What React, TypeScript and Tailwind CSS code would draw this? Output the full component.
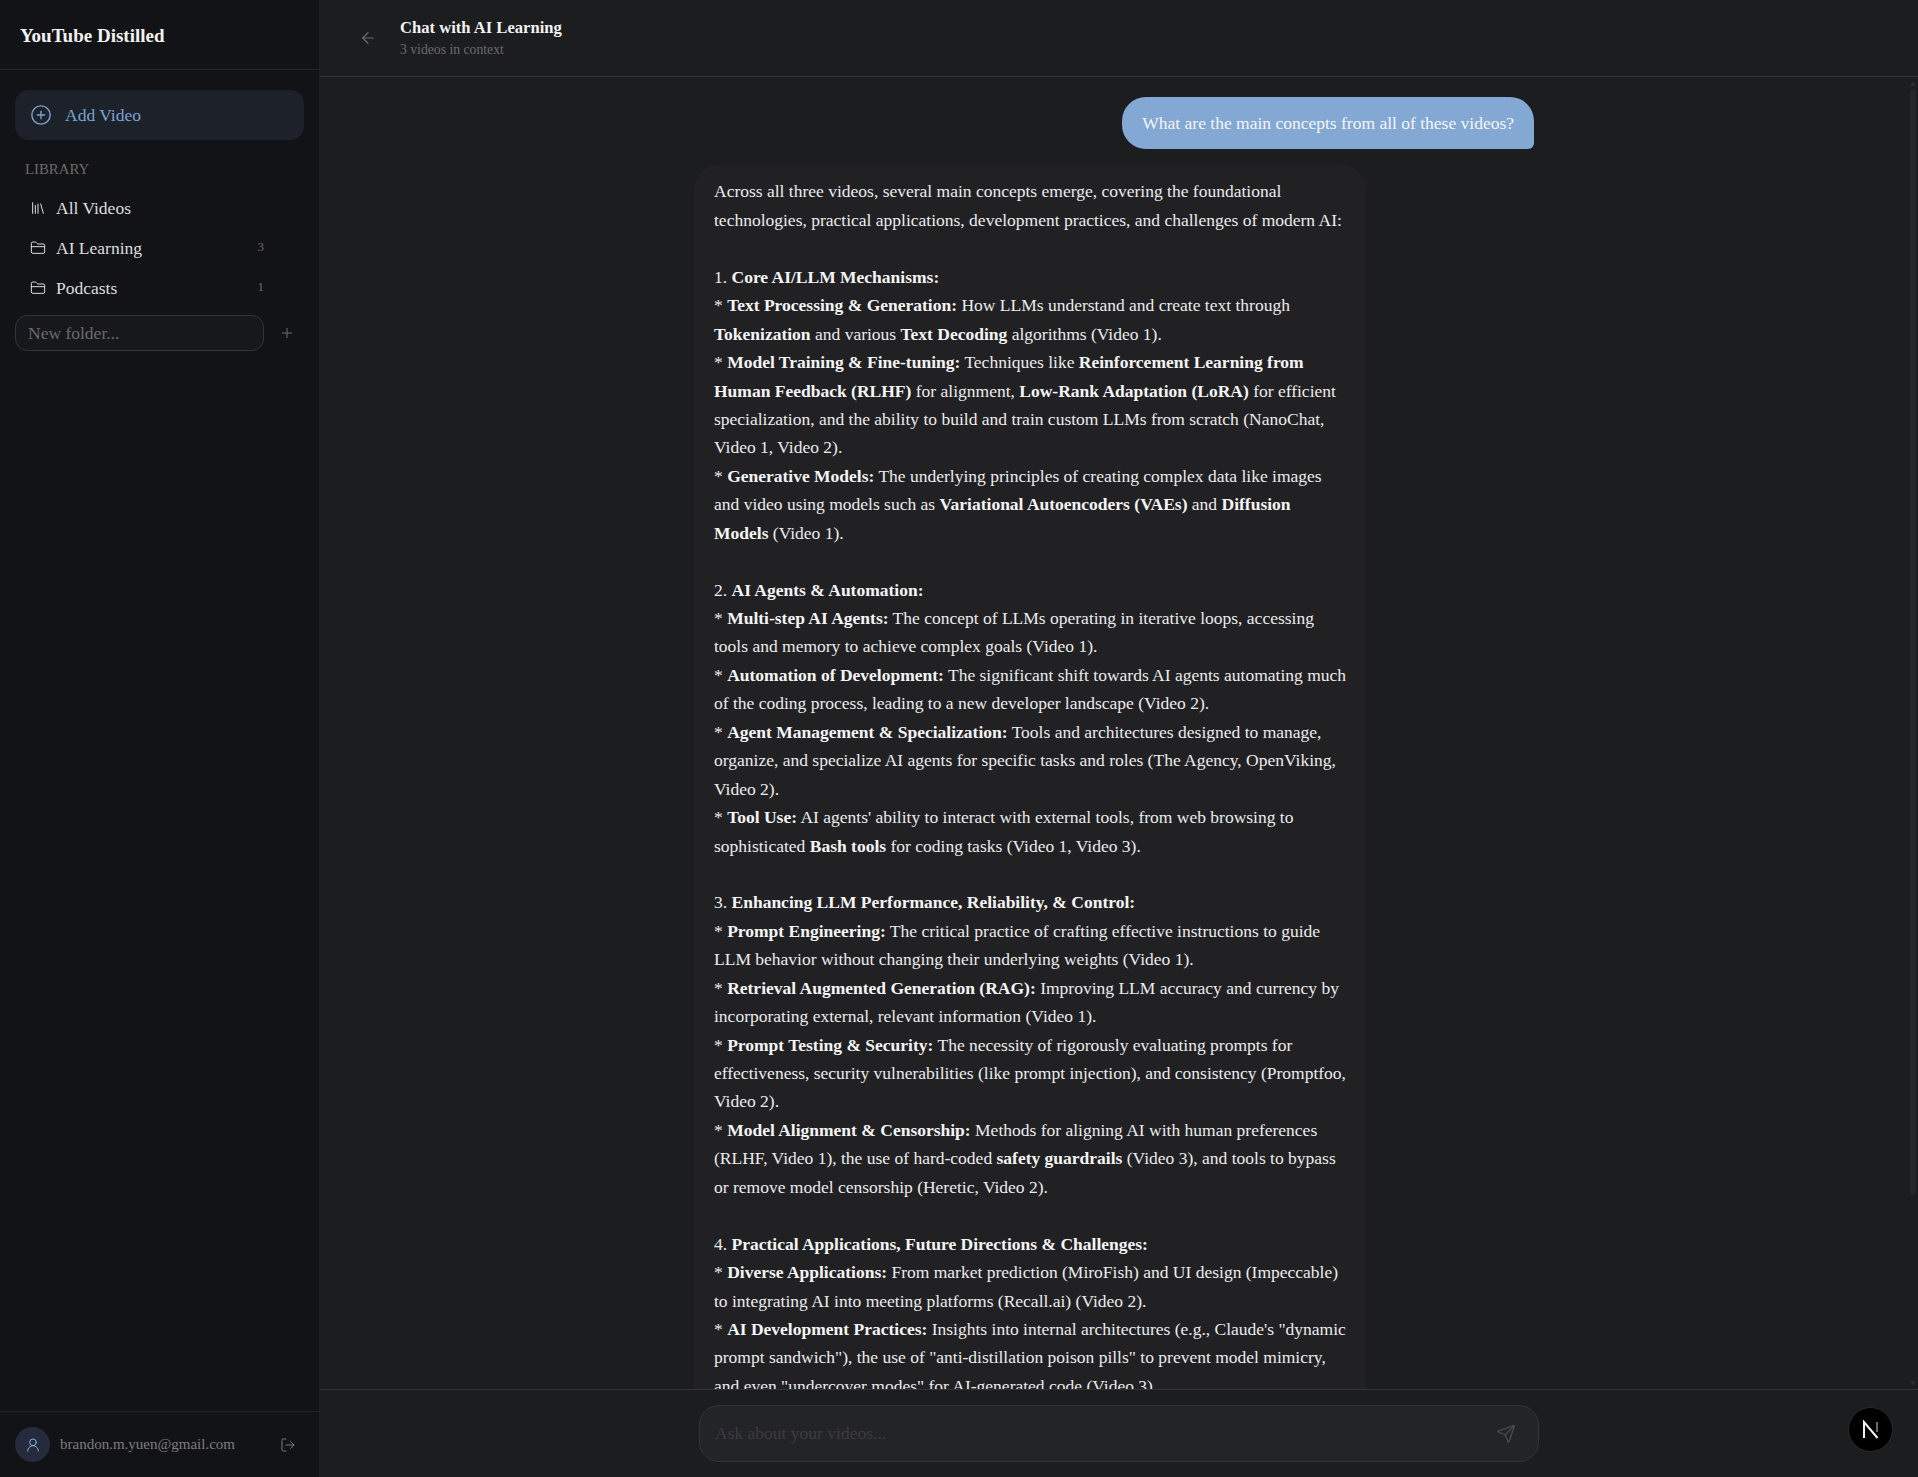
import { ArrowLeft, CirclePlus, FolderClosed, Library, LogOut, Plus, Send, UserRound } from "lucide-react";

const answer = `Across all three videos, several main concepts emerge, covering the foundational technologies, practical applications, development practices, and challenges of modern AI:

1. **Core AI/LLM Mechanisms:**
* **Text Processing & Generation:** How LLMs understand and create text through **Tokenization** and various **Text Decoding** algorithms (Video 1).
* **Model Training & Fine-tuning:** Techniques like **Reinforcement Learning from Human Feedback (RLHF)** for alignment, **Low-Rank Adaptation (LoRA)** for efficient specialization, and the ability to build and train custom LLMs from scratch (NanoChat, Video 1, Video 2).
* **Generative Models:** The underlying principles of creating complex data like images and video using models such as **Variational Autoencoders (VAEs)** and **Diffusion Models** (Video 1).

2. **AI Agents & Automation:**
* **Multi-step AI Agents:** The concept of LLMs operating in iterative loops, accessing tools and memory to achieve complex goals (Video 1).
* **Automation of Development:** The significant shift towards AI agents automating much of the coding process, leading to a new developer landscape (Video 2).
* **Agent Management & Specialization:** Tools and architectures designed to manage, organize, and specialize AI agents for specific tasks and roles (The Agency, OpenViking, Video 2).
* **Tool Use:** AI agents' ability to interact with external tools, from web browsing to sophisticated **Bash tools** for coding tasks (Video 1, Video 3).

3. **Enhancing LLM Performance, Reliability, & Control:**
* **Prompt Engineering:** The critical practice of crafting effective instructions to guide LLM behavior without changing their underlying weights (Video 1).
* **Retrieval Augmented Generation (RAG):** Improving LLM accuracy and currency by incorporating external, relevant information (Video 1).
* **Prompt Testing & Security:** The necessity of rigorously evaluating prompts for effectiveness, security vulnerabilities (like prompt injection), and consistency (Promptfoo, Video 2).
* **Model Alignment & Censorship:** Methods for aligning AI with human preferences (RLHF, Video 1), the use of hard-coded **safety guardrails** (Video 3), and tools to bypass or remove model censorship (Heretic, Video 2).

4. **Practical Applications, Future Directions & Challenges:**
* **Diverse Applications:** From market prediction (MiroFish) and UI design (Impeccable) to integrating AI into meeting platforms (Recall.ai) (Video 2).
* **AI Development Practices:** Insights into internal architectures (e.g., Claude's "dynamic prompt sandwich"), the use of "anti-distillation poison pills" to prevent model mimicry, and even "undercover modes" for AI-generated code (Video 3).`;

const folders = [
  { name: "AI Learning", count: 3 },
  { name: "Podcasts", count: 1 },
];

const Sidebar = () => {
  return (
    <aside className="w-[320px] shrink-0 h-full flex flex-col bg-[#121316] border-r border-[#1f2023]">
      <div className="h-[70px] shrink-0 flex items-center px-5 border-b border-[#232427]">
        <h1 className="mt-[4px] text-[19px] font-bold text-[#f2f2f2]">YouTube Distilled</h1>
      </div>
      <div className="flex-1 px-[15px] pt-5">
        <button className="w-full h-[50px] flex items-center gap-[13px] px-[15px] rounded-[14px] bg-[#1d2129] text-[#7ba4d4] text-[17.5px]">
          <CirclePlus size={22} strokeWidth={1.5} />
          Add Video
        </button>
        <p className="mt-[19px] px-[10px] text-[14.8px] leading-5 text-[#6f6a66]">LIBRARY</p>
        <div className="mt-[9px] flex flex-col">
          <div className="h-10 flex items-center gap-[10px] px-[15px] text-[17.5px] text-[#dedede]">
            <Library size={16} strokeWidth={1.5} />
            All Videos
          </div>
          {folders.map((f) => (
            <div key={f.name} className="h-10 flex items-center gap-[10px] px-[15px] text-[17.5px] text-[#dedede]">
              <FolderClosed size={16} strokeWidth={1.5} />
              <span className="flex-1">{f.name}</span>
              <span className="text-[13px] text-[#6b6b6b] mr-[25px] -mt-[2px]">{f.count}</span>
            </div>
          ))}
        </div>
        <div className="mt-[7px] flex items-center">
          <input
            placeholder="New folder..."
            className="w-[249px] h-[36px] px-[12px] rounded-[12px] border border-[#333438] bg-[#17181b] text-[17.5px] outline-none placeholder:text-[#6b6b6b]"
          />
          <Plus size={16} strokeWidth={1.5} className="ml-[15px] text-[#6f6f6f]" />
        </div>
      </div>
      <div className="h-[66px] shrink-0 flex items-center px-[15px] border-t border-[#232427]">
        <div className="w-[35px] h-[35px] rounded-full bg-[#252b3d] flex items-center justify-center text-[#7fb0de]">
          <UserRound size={16} strokeWidth={1.5} />
        </div>
        <span className="ml-[10px] flex-1 text-[15px] text-[#7d7d7d]">brandon.m.yuen@gmail.com</span>
        <LogOut size={16} strokeWidth={1.5} className="mr-[8px] text-[#7d7d7d]" />
      </div>
    </aside>
  );
};

const Message = ({ text }: { text: string }) => {
  const parts = text.split("**");
  return (
    <div className="max-w-[672px] self-start rounded-[24px] bg-[#212124] px-5 py-3 text-[#ececec] whitespace-pre-wrap">
      {parts.map((p, i) => (i % 2 ? <strong key={i} className="font-bold text-[#f5f5f5]">{p}</strong> : p))}
    </div>
  );
};

const App = () => {
  return (
    <div className="h-screen w-full flex overflow-hidden bg-[#1c1d1f] font-['Liberation_Serif',serif]">
      <Sidebar />
      <main className="flex-1 min-w-0 h-full flex flex-col">
        <header className="h-[77px] shrink-0 flex items-center gap-[23px] pl-[39px] border-b border-[#333437]">
          <ArrowLeft size={18} strokeWidth={1.5} className="text-[#6f6f6f]" />
          <div className="-mt-[1px]">
            <h2 className="text-[16.6px] leading-6 font-bold text-[#f2f2f2]">Chat with AI Learning</h2>
            <p className="text-[13.7px] leading-5 text-[#6b6b6b]">3 videos in context</p>
          </div>
        </header>
        <div className="relative flex-1 min-h-0 overflow-hidden pr-[10px]">
          <div className="w-[840px] mx-auto py-5 flex flex-col gap-4 text-[17.5px] leading-[1.625]">
            <div className="self-end rounded-[24px] rounded-br-[6px] bg-[#83a8d3] px-5 py-3 text-[#f5f5f5]">
              What are the main concepts from all of these videos?
            </div>
            <Message text={answer} />
          </div>
          {/* scrollbar, the sandbox browser hides native ones */}
          <div className="absolute right-[2px] top-[4px] w-0 h-0 border-x-[3px] border-x-transparent border-b-[5px] border-b-[#2a2b2e]" />
          <div className="absolute right-[2px] top-[12px] w-[6px] h-[1106px] rounded-full bg-[#252629]" />
          <div className="absolute right-[2px] bottom-[3px] w-0 h-0 border-x-[3px] border-x-transparent border-t-[5px] border-t-[#2a2b2e]" />
        </div>
        <footer className="h-[88px] shrink-0 relative flex justify-center pt-[15px] border-t border-[#333437]">
          <div className="w-[840px] h-[57px] flex items-center justify-between px-[15px] rounded-[20px] border border-[#333437] bg-[#232427]">
            <span className="text-[17.5px] text-[#3d3b40]">Ask about your videos...</span>
            <Send size={20} strokeWidth={1.5} className="mr-[7px] text-[#4a4b4e]" />
          </div>
          <div className="absolute right-[25px] top-[17px] w-[45px] h-[45px] rounded-full bg-black border border-[#2a2a2c] flex items-center justify-center">
            <svg width="20" height="20" viewBox="0 0 20 20" fill="none">
              <path d="M3 18V2L16.5 18" stroke="#f2f2f2" strokeWidth="2" />
              <path d="M16 2V12" stroke="#8a8a8a" strokeWidth="1.5" />
            </svg>
          </div>
        </footer>
      </main>
    </div>
  );
};

export default App;
